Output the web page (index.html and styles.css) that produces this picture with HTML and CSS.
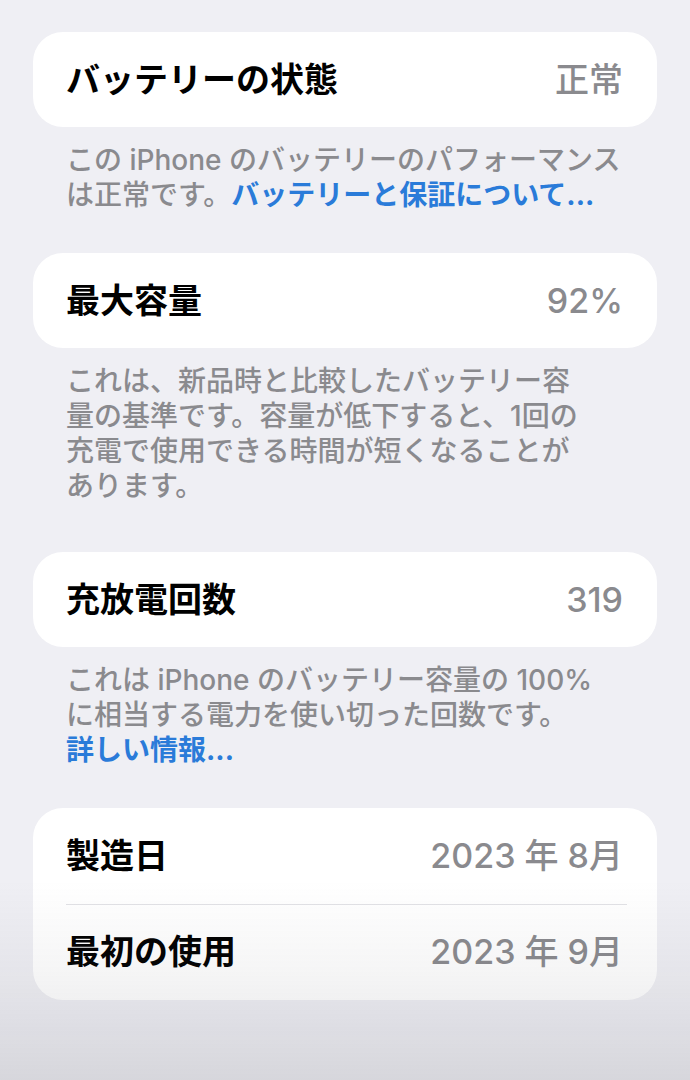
FILE: index.html
```html
<!DOCTYPE html>
<html lang="ja">
<head>
    <meta charset="UTF-8">
    <meta name="viewport" content="width=device-width, initial-scale=1.0">
    <title>バッテリー</title>
    <link rel="stylesheet" href="styles.css">
</head>
<body>
    <main class="settings">
        <section class="group">
            <div class="card">
                <div class="row">
                    <span class="row-title">バッテリーの状態</span>
                    <span class="row-value">正常</span>
                </div>
            </div>
            <p class="footnote">この iPhone のバッテリーのパフォーマンス<br>は正常です。<a class="link" href="#">バッテリーと保証について...</a></p>
        </section>

        <section class="group">
            <div class="card">
                <div class="row">
                    <span class="row-title">最大容量</span>
                    <span class="row-value">92%</span>
                </div>
            </div>
            <p class="footnote">これは、新品時と比較したバッテリー容<br>量の基準です。容量が低下すると、1回の<br>充電で使用できる時間が短くなることが<br>あります。</p>
        </section>

        <section class="group">
            <div class="card">
                <div class="row">
                    <span class="row-title">充放電回数</span>
                    <span class="row-value">319</span>
                </div>
            </div>
            <p class="footnote">これは iPhone のバッテリー容量の 100%<br>に相当する電力を使い切った回数です。<br><a class="link" href="#">詳しい情報...</a></p>
        </section>

        <section class="group">
            <div class="card">
                <div class="row">
                    <span class="row-title">製造日</span>
                    <span class="row-value">2023 年 8月</span>
                </div>
                <div class="row">
                    <span class="row-title">最初の使用</span>
                    <span class="row-value">2023 年 9月</span>
                </div>
            </div>
        </section>
    </main>
    <div class="bottom-shade"></div>
</body>
</html>
```

FILE: styles.css
```css
:root {
    --bg-color: #efeff4;
    --card-bg: #ffffff;
    --text-color: #000000;
    --secondary: #8a8a8e;
    --link-color: #2a7bd9;
    --divider: #e2e2e6;
}

body {
    font-family: Inter, "Noto Sans CJK JP", sans-serif;
    background-color: var(--bg-color);
    color: var(--text-color);
    margin: 0;
    padding: 0;
    min-height: 100vh;
}

.settings {
    padding: 32px 33px 0;
}

.group {
    margin-bottom: 40px;
}

.group:nth-child(2) {
    margin-bottom: 48px;
}

.card {
    background-color: var(--card-bg);
    border-radius: 30px;
    overflow: hidden;
}

.row {
    height: 95px;
    padding: 0 34px 0 33px;
    display: flex;
    align-items: center;
    justify-content: space-between;
}

.row + .row {
    height: 96px;
    position: relative;
}

/* inset divider between rows */
.row + .row::before {
    content: "";
    position: absolute;
    top: 0;
    left: 33px;
    right: 30px;
    height: 1px;
    background-color: var(--divider);
}

.card .row:first-child:not(:only-child) {
    height: 96px;
}

.row-title {
    font-size: 34px;
    font-weight: 700;
    line-height: 1;
}

.row-value {
    font-size: 34px;
    font-weight: 500;
    line-height: 1;
    color: var(--secondary);
}

.footnote {
    margin: 16px 33px 0;
    font-size: 28px;
    font-weight: 500;
    line-height: 35px;
    color: var(--secondary);
    white-space: nowrap;
}

.link {
    color: var(--link-color);
    text-decoration: none;
    font-weight: 700;
}

/* soft grey shade at the bottom of the screenshot */
.bottom-shade {
    position: fixed;
    left: 0;
    right: 0;
    bottom: 0;
    height: 200px;
    background: linear-gradient(to bottom, rgba(90, 90, 100, 0) 0%, rgba(90, 90, 100, 0.06) 45%, rgba(90, 90, 100, 0.16) 100%);
    pointer-events: none;
}
```
